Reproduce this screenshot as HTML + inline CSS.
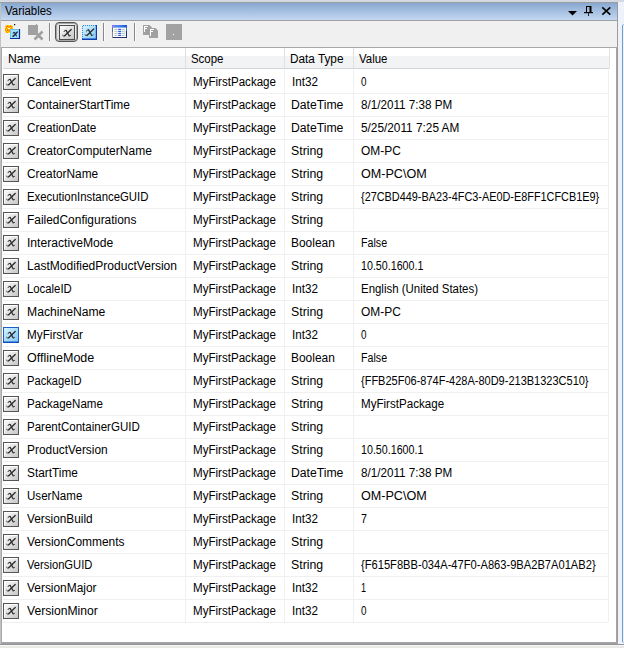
<!DOCTYPE html>
<html><head><meta charset="utf-8">
<style>
*{box-sizing:border-box}
html,body{margin:0;padding:0}
body{width:624px;height:648px;position:relative;overflow:hidden;background:#ebe8e8;font-family:"Liberation Sans",sans-serif;font-size:12px;color:#000}
.a{position:absolute}
.t{position:absolute;white-space:nowrap;line-height:14px;top:0;transform-origin:0 0}
.row{position:absolute;left:0;width:624px;height:23px}
.row .t{top:5px}
.rl{position:absolute;left:3px;width:605px;height:1px;background:#f0f0f0}
.icw{position:absolute;left:3px;width:16px;height:16px}
.ic{display:block}
</style></head><body>
<svg width="0" height="0" style="position:absolute"><defs>
<linearGradient id="gg" x1="0" y1="0" x2="1" y2="1"><stop offset="0" stop-color="#ffffff"/><stop offset="1" stop-color="#c4c4c4"/></linearGradient>
<linearGradient id="gb" x1="0" y1="0" x2="1" y2="1"><stop offset="0" stop-color="#d8f6ff"/><stop offset="1" stop-color="#7cc4f4"/></linearGradient>
</defs></svg>
<!-- top strip -->
<div class="a" style="left:0;top:0;width:624px;height:2px;background:#d4d8e0"></div>
<div class="a" style="left:0;top:2px;width:618px;height:1px;background:#9a9da2"></div>
<!-- right strip -->
<div class="a" style="left:618px;top:2px;width:6px;height:642px;background:#eef3fb"></div>
<div class="a" style="left:622px;top:25px;width:1px;height:617px;background:#6c9ec6"></div>
<div class="a" style="left:623px;top:24px;width:1px;height:1px;background:#9cbedc"></div>
<div class="a" style="left:623px;top:642px;width:1px;height:1px;background:#9cbedc"></div>
<!-- left border -->
<div class="a" style="left:0;top:3px;width:1px;height:641px;background:#c2c2c2"></div>
<div class="a" style="left:1px;top:48px;width:1px;height:596px;background:#a8a8a8"></div>
<!-- title bar -->
<div class="a" style="left:1px;top:3px;width:616px;height:17px;background:linear-gradient(#88a8d0,#c4d8f2)"></div>
<div class="a" style="left:617px;top:2px;width:1px;height:642px;background:#9c9c9c"></div>
<div class="a" style="left:1px;top:20px;width:616px;height:1px;background:#a0a0a0"></div>

<!-- title icons -->
<svg class="a" style="left:566px;top:9px" width="12" height="8" viewBox="0 0 12 8"><path d="M2,2 H11 L6.5,6.5 Z" fill="#000"/></svg>
<svg class="a" style="left:583px;top:5px" width="11" height="12" viewBox="0 0 11 12"><path d="M3.5,1.5 V7 M7.5,1.5 V7 M3,1.5 H8" stroke="#000" stroke-width="1" fill="none"/><rect x="6.5" y="1" width="2" height="6.5" fill="#000"/><rect x="1" y="7" width="9" height="1.2" fill="#000"/><rect x="5" y="8" width="1" height="3" fill="#202040"/></svg>
<svg class="a" style="left:600px;top:5px" width="13" height="12" viewBox="0 0 13 12"><path d="M2.3,2.3 L10.3,9.7 M10.3,2.3 L2.3,9.7" stroke="#000" stroke-width="1.6"/></svg>
<!-- toolbar -->
<div class="a" style="left:1px;top:21px;width:616px;height:26px;background:#f0f0f0"></div>
<!-- add icon -->
<svg class="a" style="left:4px;top:23px" width="18" height="18" viewBox="0 0 18 18">
<path d="M2.5,2 H7.5 L9,3.5 V8.5 L7.5,10 H2.5 L1,8.5 V3.5 Z" fill="#ff9c00"/>
<g fill="#ffe000"><rect x="2" y="2" width="1" height="1"/><rect x="4" y="2" width="2" height="1"/><rect x="7" y="2" width="1" height="1"/><rect x="1" y="4" width="1" height="1"/><rect x="3" y="4" width="1" height="1"/><rect x="6" y="4" width="1" height="1"/><rect x="8" y="4" width="1" height="1"/><rect x="2" y="6" width="1" height="1"/><rect x="7" y="6" width="1" height="1"/><rect x="1" y="8" width="1" height="1"/><rect x="3" y="8" width="1" height="1"/><rect x="6" y="8" width="1" height="1"/><rect x="8" y="8" width="1" height="1"/><rect x="4" y="9" width="2" height="1"/></g>
<g fill="#ff5a00"><rect x="3" y="3" width="1" height="1"/><rect x="6" y="3" width="1" height="1"/><rect x="3" y="7" width="1" height="1"/><rect x="6" y="7" width="1" height="1"/></g>
<rect x="4" y="5" width="2" height="1" fill="#fff"/>
<rect x="10" y="1" width="1.2" height="1.2" fill="#000"/>
<rect x="6" y="6" width="10" height="10" fill="#9fe4fb"/>
<path d="M6.5,15.5 V6.5 H15.5" stroke="#68c4ec" stroke-width="1" fill="none"/>
<path d="M6,15.5 H15.5 V6" stroke="#0a2c9c" stroke-width="1.2" fill="none"/>
<g fill="none" stroke="#1e2a40" stroke-linecap="round"><path d="M13.3,9 L9.4,13.2" stroke-width="1.3"/><path d="M9.4,13.2 Q8.8,13.8 8.3,13" stroke-width="0.9"/><path d="M9.2,10.2 Q9.6,8.9 10.6,9.5 L12.4,13" stroke-width="1.1"/></g>
</svg>
<!-- delete disabled -->
<svg class="a" style="left:27px;top:23px" width="18" height="18" viewBox="0 0 18 18">
<rect x="1" y="2" width="10" height="10" fill="#a0a0a0"/><rect x="9" y="1" width="1" height="1" fill="#a0a0a0"/>
<path d="M7.5,16.5 L15.5,8.5 M8,9 L15.5,16.5" stroke="#a0a0a0" stroke-width="2.6"/>
</svg>
<div class="a" style="left:49px;top:23px;width:1px;height:18px;background:#888"></div><div class="a" style="left:50px;top:23px;width:1px;height:18px;background:#fbfbfb"></div>
<!-- pressed toggle -->
<div class="a" style="left:55px;top:22px;width:23px;height:20px;border:1px solid #555;border-radius:4px;background:linear-gradient(90deg,#d8d8d8,#f4f4f4 30%,#ececec);box-shadow:inset 0 0 0 1px #a8a8a8"></div>
<svg class="a" style="left:59px;top:25px" width="16" height="15" viewBox="0 0 16 15"><rect x="0.5" y="0.5" width="15" height="14" fill="url(#gg)" stroke="#4d4d4d"/><g fill="none" stroke="#2e2e2e" stroke-linecap="round"><path d="M12.2,4.5 L5.7,10.8" stroke-width="1.35"/><path d="M5.7,10.8 Q4.6,11.8 3.5,10.4" stroke-width="0.95"/><path d="M5.0,6.6 Q5.4,4.6 7.1,5.4" stroke-width="0.95"/><path d="M7.1,5.4 L10.1,10.8" stroke-width="1.25"/><path d="M10.1,10.8 Q10.9,11.8 11.6,10.3" stroke-width="0.95"/></g></svg>
<svg class="a" style="left:81px;top:24px" width="16" height="16" viewBox="0 0 16 16"><rect x="1" y="1" width="15" height="15" fill="url(#gb)"/><path d="M1.5,15 V1.5 H15" stroke="#3a86d6" stroke-width="1" stroke-dasharray="1 1" fill="none"/><path d="M1,15.3 H15.5 V1" stroke="#0c3cb4" stroke-width="1.4" fill="none"/><g transform="translate(0.5,0.5)"><g fill="none" stroke="#2e2e2e" stroke-linecap="round"><path d="M12.2,4.5 L5.7,10.8" stroke-width="1.35"/><path d="M5.7,10.8 Q4.6,11.8 3.5,10.4" stroke-width="0.95"/><path d="M5.0,6.6 Q5.4,4.6 7.1,5.4" stroke-width="0.95"/><path d="M7.1,5.4 L10.1,10.8" stroke-width="1.25"/><path d="M10.1,10.8 Q10.9,11.8 11.6,10.3" stroke-width="0.95"/></g></g></svg>
<div class="a" style="left:103px;top:23px;width:1px;height:18px;background:#888"></div><div class="a" style="left:104px;top:23px;width:1px;height:18px;background:#fbfbfb"></div>
<!-- grid icon -->
<svg class="a" style="left:112px;top:25px" width="15" height="13" viewBox="0 0 15 13">
<defs><linearGradient id="gt" x1="0" x2="1"><stop offset="0" stop-color="#8a7cff"/><stop offset="0.5" stop-color="#3c82f0"/><stop offset="1" stop-color="#1c50d8"/></linearGradient></defs>
<rect x="0" y="0" width="15" height="13" fill="#4a7a90"/>
<rect x="0" y="0" width="15" height="2.6" fill="url(#gt)"/>
<rect x="0" y="12" width="15" height="1" fill="#283070"/>
<rect x="14" y="6" width="1" height="7" fill="#2a2a6a"/>
<rect x="0" y="7" width="1" height="6" fill="#8a8aa0"/>
<rect x="1" y="2.6" width="13" height="9.4" fill="#fff"/>
<g fill="#c4c4c4"><rect x="2.5" y="3.8" width="3" height="1.2"/><rect x="2.5" y="5.8" width="3" height="1.2"/><rect x="2.5" y="7.8" width="3" height="1.2"/><rect x="2.5" y="9.8" width="3" height="1.2"/>
<rect x="9.5" y="3.8" width="3" height="1.2"/><rect x="9.5" y="5.8" width="3" height="1.2"/><rect x="9.5" y="7.8" width="3" height="1.2"/><rect x="9.5" y="9.8" width="3" height="1.2"/></g>
<g fill="#c8ecfa"><rect x="12" y="5" width="1.5" height="6"/></g>
<g fill="#2a5ce0"><rect x="6.2" y="3.8" width="2.8" height="1.2"/><rect x="6.2" y="5.8" width="2.8" height="1.2"/><rect x="6.2" y="7.8" width="2.8" height="1.2"/><rect x="6.2" y="9.8" width="2.8" height="1.2"/></g>
</svg>
<div class="a" style="left:134px;top:23px;width:1px;height:18px;background:#888"></div><div class="a" style="left:135px;top:23px;width:1px;height:18px;background:#fbfbfb"></div>
<!-- FF icon -->
<svg class="a" style="left:143px;top:25px" width="16" height="13" viewBox="0 0 16 13">
<path d="M0,0 H6.5 L9,2.5 V10 H0 Z" fill="#a0a0a0"/><path d="M6,3 H12.5 L15,5.5 V13 H6 Z" fill="#a0a0a0"/>
<g fill="#fff" shape-rendering="crispEdges"><rect x="1" y="1" width="1" height="6"/><rect x="1" y="1" width="4" height="1"/><rect x="1" y="3" width="3" height="1"/></g>
<g fill="#fff" shape-rendering="crispEdges"><rect x="7" y="4" width="1" height="7"/><rect x="7" y="4" width="4" height="1"/><rect x="7" y="6" width="3" height="1"/></g>
</svg>
<div class="a" style="left:166px;top:24px;width:16px;height:16px;background:#a2a2a2"></div>
<div class="a" style="left:173px;top:34px;width:1px;height:1px;background:#fff"></div>
<!-- grid -->
<div class="a" style="left:1px;top:47px;width:617px;height:1px;background:#a8a8a8"></div>
<div class="a" style="left:2px;top:48px;width:614px;height:594px;background:#fff"></div>
<div class="a" style="left:616px;top:47px;width:1px;height:597px;background:#a4a4a4"></div>
<div class="a" style="left:1px;top:642px;width:617px;height:2px;background:#a2a3a6"></div>
<div class="a" style="left:0px;top:644px;width:624px;height:1px;background:#939393"></div>
<div class="a" style="left:0;top:645px;width:624px;height:1px;background:#f8f8f8"></div>
<!-- header -->
<div class="a" style="left:3px;top:56px;width:606px;height:12px;background:#f2f3f5"></div>
<div class="a" style="left:3px;top:68px;width:607px;height:1px;background:#d5d5d5"></div>
<div class="a" style="left:609px;top:48px;width:1px;height:21px;background:#e2e2e2"></div>
<div class="a" style="left:185px;top:48px;width:1px;height:20px;background:#e0e0e0"></div>
<div class="a" style="left:284px;top:48px;width:1px;height:20px;background:#e0e0e0"></div>
<div class="a" style="left:353px;top:48px;width:1px;height:20px;background:#e0e0e0"></div>
<span class="t" style="left:7.6px;transform:scaleX(1.0159);top:52px;">Name</span><span class="t" style="left:190.7px;transform:scaleX(0.9522);top:52px;">Scope</span><span class="t" style="left:289.6px;transform:scaleX(0.9814);top:52px;">Data Type</span><span class="t" style="left:359.0px;transform:scaleX(0.9522);top:52px;">Value</span><span class="t" style="left:5.2px;transform:scaleX(0.9528);top:4px;">Variables</span>
<!-- column lines -->
<div class="a" style="left:185px;top:70px;width:1px;height:552px;background:#f0f0f0"></div>
<div class="a" style="left:284px;top:70px;width:1px;height:552px;background:#f0f0f0"></div>
<div class="a" style="left:353px;top:70px;width:1px;height:552px;background:#f0f0f0"></div>
<div class="a" style="left:608px;top:70px;width:1px;height:552px;background:#f0f0f0"></div>
<div class="rl" style="top:93px"></div>
<div class="icw" style="top:74px"><svg class="ic" width="16" height="16" viewBox="0 0 16 16"><rect x="0.5" y="0.5" width="15" height="15" fill="url(#gg)" stroke="#555"/><path d="M1.5,14 V1.5 H14" fill="none" stroke="#fff" stroke-width="1"/><g fill="none" stroke="#2e2e2e" stroke-linecap="round"><path d="M12.2,4.5 L5.7,10.8" stroke-width="1.35"/><path d="M5.7,10.8 Q4.6,11.8 3.5,10.4" stroke-width="0.95"/><path d="M5.0,6.6 Q5.4,4.6 7.1,5.4" stroke-width="0.95"/><path d="M7.1,5.4 L10.1,10.8" stroke-width="1.25"/><path d="M10.1,10.8 Q10.9,11.8 11.6,10.3" stroke-width="0.95"/></g></svg></div>
<div class="row" style="top:70px"><span class="t" style="left:27.0px;transform:scaleX(0.9426);">CancelEvent</span><span class="t" style="left:193.0px;transform:scaleX(0.9649);">MyFirstPackage</span><span class="t" style="left:291.8px;transform:scaleX(0.9732);">Int32</span><span class="t" style="left:361.0px;transform:scaleX(0.8226);">0</span></div>
<div class="rl" style="top:116px"></div>
<div class="icw" style="top:97px"><svg class="ic" width="16" height="16" viewBox="0 0 16 16"><rect x="0.5" y="0.5" width="15" height="15" fill="url(#gg)" stroke="#555"/><path d="M1.5,14 V1.5 H14" fill="none" stroke="#fff" stroke-width="1"/><g fill="none" stroke="#2e2e2e" stroke-linecap="round"><path d="M12.2,4.5 L5.7,10.8" stroke-width="1.35"/><path d="M5.7,10.8 Q4.6,11.8 3.5,10.4" stroke-width="0.95"/><path d="M5.0,6.6 Q5.4,4.6 7.1,5.4" stroke-width="0.95"/><path d="M7.1,5.4 L10.1,10.8" stroke-width="1.25"/><path d="M10.1,10.8 Q10.9,11.8 11.6,10.3" stroke-width="0.95"/></g></svg></div>
<div class="row" style="top:93px"><span class="t" style="left:27.0px;transform:scaleX(0.9932);">ContainerStartTime</span><span class="t" style="left:193.0px;transform:scaleX(0.9649);">MyFirstPackage</span><span class="t" style="left:291.0px;transform:scaleX(1.0157);">DateTime</span><span class="t" style="left:361.0px;transform:scaleX(0.972);">8/1/2011 7:38 PM</span></div>
<div class="rl" style="top:139px"></div>
<div class="icw" style="top:120px"><svg class="ic" width="16" height="16" viewBox="0 0 16 16"><rect x="0.5" y="0.5" width="15" height="15" fill="url(#gg)" stroke="#555"/><path d="M1.5,14 V1.5 H14" fill="none" stroke="#fff" stroke-width="1"/><g fill="none" stroke="#2e2e2e" stroke-linecap="round"><path d="M12.2,4.5 L5.7,10.8" stroke-width="1.35"/><path d="M5.7,10.8 Q4.6,11.8 3.5,10.4" stroke-width="0.95"/><path d="M5.0,6.6 Q5.4,4.6 7.1,5.4" stroke-width="0.95"/><path d="M7.1,5.4 L10.1,10.8" stroke-width="1.25"/><path d="M10.1,10.8 Q10.9,11.8 11.6,10.3" stroke-width="0.95"/></g></svg></div>
<div class="row" style="top:116px"><span class="t" style="left:27.0px;transform:scaleX(0.9801);">CreationDate</span><span class="t" style="left:193.0px;transform:scaleX(0.9649);">MyFirstPackage</span><span class="t" style="left:291.0px;transform:scaleX(1.0157);">DateTime</span><span class="t" style="left:361.0px;transform:scaleX(0.9848);">5/25/2011 7:25 AM</span></div>
<div class="rl" style="top:162px"></div>
<div class="icw" style="top:143px"><svg class="ic" width="16" height="16" viewBox="0 0 16 16"><rect x="0.5" y="0.5" width="15" height="15" fill="url(#gg)" stroke="#555"/><path d="M1.5,14 V1.5 H14" fill="none" stroke="#fff" stroke-width="1"/><g fill="none" stroke="#2e2e2e" stroke-linecap="round"><path d="M12.2,4.5 L5.7,10.8" stroke-width="1.35"/><path d="M5.7,10.8 Q4.6,11.8 3.5,10.4" stroke-width="0.95"/><path d="M5.0,6.6 Q5.4,4.6 7.1,5.4" stroke-width="0.95"/><path d="M7.1,5.4 L10.1,10.8" stroke-width="1.25"/><path d="M10.1,10.8 Q10.9,11.8 11.6,10.3" stroke-width="0.95"/></g></svg></div>
<div class="row" style="top:139px"><span class="t" style="left:27.0px;transform:scaleX(1.0008);">CreatorComputerName</span><span class="t" style="left:193.0px;transform:scaleX(0.9649);">MyFirstPackage</span><span class="t" style="left:291.0px;transform:scaleX(1.0261);">String</span><span class="t" style="left:361.0px;transform:scaleX(0.9949);">OM-PC</span></div>
<div class="rl" style="top:185px"></div>
<div class="icw" style="top:166px"><svg class="ic" width="16" height="16" viewBox="0 0 16 16"><rect x="0.5" y="0.5" width="15" height="15" fill="url(#gg)" stroke="#555"/><path d="M1.5,14 V1.5 H14" fill="none" stroke="#fff" stroke-width="1"/><g fill="none" stroke="#2e2e2e" stroke-linecap="round"><path d="M12.2,4.5 L5.7,10.8" stroke-width="1.35"/><path d="M5.7,10.8 Q4.6,11.8 3.5,10.4" stroke-width="0.95"/><path d="M5.0,6.6 Q5.4,4.6 7.1,5.4" stroke-width="0.95"/><path d="M7.1,5.4 L10.1,10.8" stroke-width="1.25"/><path d="M10.1,10.8 Q10.9,11.8 11.6,10.3" stroke-width="0.95"/></g></svg></div>
<div class="row" style="top:162px"><span class="t" style="left:27.0px;transform:scaleX(0.9874);">CreatorName</span><span class="t" style="left:193.0px;transform:scaleX(0.9649);">MyFirstPackage</span><span class="t" style="left:291.0px;transform:scaleX(1.0261);">String</span><span class="t" style="left:361.0px;transform:scaleX(1.0486);">OM-PC\OM</span></div>
<div class="rl" style="top:208px"></div>
<div class="icw" style="top:189px"><svg class="ic" width="16" height="16" viewBox="0 0 16 16"><rect x="0.5" y="0.5" width="15" height="15" fill="url(#gg)" stroke="#555"/><path d="M1.5,14 V1.5 H14" fill="none" stroke="#fff" stroke-width="1"/><g fill="none" stroke="#2e2e2e" stroke-linecap="round"><path d="M12.2,4.5 L5.7,10.8" stroke-width="1.35"/><path d="M5.7,10.8 Q4.6,11.8 3.5,10.4" stroke-width="0.95"/><path d="M5.0,6.6 Q5.4,4.6 7.1,5.4" stroke-width="0.95"/><path d="M7.1,5.4 L10.1,10.8" stroke-width="1.25"/><path d="M10.1,10.8 Q10.9,11.8 11.6,10.3" stroke-width="0.95"/></g></svg></div>
<div class="row" style="top:185px"><span class="t" style="left:27.0px;transform:scaleX(0.9482);">ExecutionInstanceGUID</span><span class="t" style="left:193.0px;transform:scaleX(0.9649);">MyFirstPackage</span><span class="t" style="left:291.0px;transform:scaleX(1.0261);">String</span><span class="t" style="left:361.0px;transform:scaleX(0.9063);">{27CBD449-BA23-4FC3-AE0D-E8FF1CFCB1E9}</span></div>
<div class="rl" style="top:231px"></div>
<div class="icw" style="top:212px"><svg class="ic" width="16" height="16" viewBox="0 0 16 16"><rect x="0.5" y="0.5" width="15" height="15" fill="url(#gg)" stroke="#555"/><path d="M1.5,14 V1.5 H14" fill="none" stroke="#fff" stroke-width="1"/><g fill="none" stroke="#2e2e2e" stroke-linecap="round"><path d="M12.2,4.5 L5.7,10.8" stroke-width="1.35"/><path d="M5.7,10.8 Q4.6,11.8 3.5,10.4" stroke-width="0.95"/><path d="M5.0,6.6 Q5.4,4.6 7.1,5.4" stroke-width="0.95"/><path d="M7.1,5.4 L10.1,10.8" stroke-width="1.25"/><path d="M10.1,10.8 Q10.9,11.8 11.6,10.3" stroke-width="0.95"/></g></svg></div>
<div class="row" style="top:208px"><span class="t" style="left:27.0px;transform:scaleX(0.9945);">FailedConfigurations</span><span class="t" style="left:193.0px;transform:scaleX(0.9649);">MyFirstPackage</span><span class="t" style="left:291.0px;transform:scaleX(1.0261);">String</span></div>
<div class="rl" style="top:254px"></div>
<div class="icw" style="top:235px"><svg class="ic" width="16" height="16" viewBox="0 0 16 16"><rect x="0.5" y="0.5" width="15" height="15" fill="url(#gg)" stroke="#555"/><path d="M1.5,14 V1.5 H14" fill="none" stroke="#fff" stroke-width="1"/><g fill="none" stroke="#2e2e2e" stroke-linecap="round"><path d="M12.2,4.5 L5.7,10.8" stroke-width="1.35"/><path d="M5.7,10.8 Q4.6,11.8 3.5,10.4" stroke-width="0.95"/><path d="M5.0,6.6 Q5.4,4.6 7.1,5.4" stroke-width="0.95"/><path d="M7.1,5.4 L10.1,10.8" stroke-width="1.25"/><path d="M10.1,10.8 Q10.9,11.8 11.6,10.3" stroke-width="0.95"/></g></svg></div>
<div class="row" style="top:231px"><span class="t" style="left:27.0px;transform:scaleX(1.0106);">InteractiveMode</span><span class="t" style="left:193.0px;transform:scaleX(0.9649);">MyFirstPackage</span><span class="t" style="left:291.0px;transform:scaleX(0.9954);">Boolean</span><span class="t" style="left:361.0px;transform:scaleX(0.8889);">False</span></div>
<div class="rl" style="top:277px"></div>
<div class="icw" style="top:258px"><svg class="ic" width="16" height="16" viewBox="0 0 16 16"><rect x="0.5" y="0.5" width="15" height="15" fill="url(#gg)" stroke="#555"/><path d="M1.5,14 V1.5 H14" fill="none" stroke="#fff" stroke-width="1"/><g fill="none" stroke="#2e2e2e" stroke-linecap="round"><path d="M12.2,4.5 L5.7,10.8" stroke-width="1.35"/><path d="M5.7,10.8 Q4.6,11.8 3.5,10.4" stroke-width="0.95"/><path d="M5.0,6.6 Q5.4,4.6 7.1,5.4" stroke-width="0.95"/><path d="M7.1,5.4 L10.1,10.8" stroke-width="1.25"/><path d="M10.1,10.8 Q10.9,11.8 11.6,10.3" stroke-width="0.95"/></g></svg></div>
<div class="row" style="top:254px"><span class="t" style="left:27.0px;transform:scaleX(1.004);">LastModifiedProductVersion</span><span class="t" style="left:193.0px;transform:scaleX(0.9649);">MyFirstPackage</span><span class="t" style="left:291.0px;transform:scaleX(1.0261);">String</span><span class="t" style="left:361.0px;transform:scaleX(0.8906);">10.50.1600.1</span></div>
<div class="rl" style="top:300px"></div>
<div class="icw" style="top:281px"><svg class="ic" width="16" height="16" viewBox="0 0 16 16"><rect x="0.5" y="0.5" width="15" height="15" fill="url(#gg)" stroke="#555"/><path d="M1.5,14 V1.5 H14" fill="none" stroke="#fff" stroke-width="1"/><g fill="none" stroke="#2e2e2e" stroke-linecap="round"><path d="M12.2,4.5 L5.7,10.8" stroke-width="1.35"/><path d="M5.7,10.8 Q4.6,11.8 3.5,10.4" stroke-width="0.95"/><path d="M5.0,6.6 Q5.4,4.6 7.1,5.4" stroke-width="0.95"/><path d="M7.1,5.4 L10.1,10.8" stroke-width="1.25"/><path d="M10.1,10.8 Q10.9,11.8 11.6,10.3" stroke-width="0.95"/></g></svg></div>
<div class="row" style="top:277px"><span class="t" style="left:27.0px;transform:scaleX(0.9444);">LocaleID</span><span class="t" style="left:193.0px;transform:scaleX(0.9649);">MyFirstPackage</span><span class="t" style="left:291.8px;transform:scaleX(0.9732);">Int32</span><span class="t" style="left:361.0px;transform:scaleX(0.9533);">English (United States)</span></div>
<div class="rl" style="top:323px"></div>
<div class="icw" style="top:304px"><svg class="ic" width="16" height="16" viewBox="0 0 16 16"><rect x="0.5" y="0.5" width="15" height="15" fill="url(#gg)" stroke="#555"/><path d="M1.5,14 V1.5 H14" fill="none" stroke="#fff" stroke-width="1"/><g fill="none" stroke="#2e2e2e" stroke-linecap="round"><path d="M12.2,4.5 L5.7,10.8" stroke-width="1.35"/><path d="M5.7,10.8 Q4.6,11.8 3.5,10.4" stroke-width="0.95"/><path d="M5.0,6.6 Q5.4,4.6 7.1,5.4" stroke-width="0.95"/><path d="M7.1,5.4 L10.1,10.8" stroke-width="1.25"/><path d="M10.1,10.8 Q10.9,11.8 11.6,10.3" stroke-width="0.95"/></g></svg></div>
<div class="row" style="top:300px"><span class="t" style="left:27.0px;transform:scaleX(1.013);">MachineName</span><span class="t" style="left:193.0px;transform:scaleX(0.9649);">MyFirstPackage</span><span class="t" style="left:291.0px;transform:scaleX(1.0261);">String</span><span class="t" style="left:361.0px;transform:scaleX(0.9949);">OM-PC</span></div>
<div class="rl" style="top:346px"></div>
<div class="icw" style="top:327px"><svg class="ic" width="16" height="16" viewBox="0 0 16 16"><defs></defs><rect x="0.5" y="0.5" width="15" height="15" fill="url(#gb)" stroke="#1d5fc9"/><rect x="0" y="14.5" width="16" height="1.5" fill="#0f4fbf"/><g fill="none" stroke="#2e2e2e" stroke-linecap="round"><path d="M12.2,4.5 L5.7,10.8" stroke-width="1.35"/><path d="M5.7,10.8 Q4.6,11.8 3.5,10.4" stroke-width="0.95"/><path d="M5.0,6.6 Q5.4,4.6 7.1,5.4" stroke-width="0.95"/><path d="M7.1,5.4 L10.1,10.8" stroke-width="1.25"/><path d="M10.1,10.8 Q10.9,11.8 11.6,10.3" stroke-width="0.95"/></g></svg></div>
<div class="row" style="top:323px"><span class="t" style="left:27.0px;transform:scaleX(0.9772);">MyFirstVar</span><span class="t" style="left:193.0px;transform:scaleX(0.9649);">MyFirstPackage</span><span class="t" style="left:291.8px;transform:scaleX(0.9732);">Int32</span><span class="t" style="left:361.0px;transform:scaleX(0.8226);">0</span></div>
<div class="rl" style="top:369px"></div>
<div class="icw" style="top:350px"><svg class="ic" width="16" height="16" viewBox="0 0 16 16"><rect x="0.5" y="0.5" width="15" height="15" fill="url(#gg)" stroke="#555"/><path d="M1.5,14 V1.5 H14" fill="none" stroke="#fff" stroke-width="1"/><g fill="none" stroke="#2e2e2e" stroke-linecap="round"><path d="M12.2,4.5 L5.7,10.8" stroke-width="1.35"/><path d="M5.7,10.8 Q4.6,11.8 3.5,10.4" stroke-width="0.95"/><path d="M5.0,6.6 Q5.4,4.6 7.1,5.4" stroke-width="0.95"/><path d="M7.1,5.4 L10.1,10.8" stroke-width="1.25"/><path d="M10.1,10.8 Q10.9,11.8 11.6,10.3" stroke-width="0.95"/></g></svg></div>
<div class="row" style="top:346px"><span class="t" style="left:27.0px;transform:scaleX(1.0438);">OfflineMode</span><span class="t" style="left:193.0px;transform:scaleX(0.9649);">MyFirstPackage</span><span class="t" style="left:291.0px;transform:scaleX(0.9954);">Boolean</span><span class="t" style="left:361.0px;transform:scaleX(0.8889);">False</span></div>
<div class="rl" style="top:392px"></div>
<div class="icw" style="top:373px"><svg class="ic" width="16" height="16" viewBox="0 0 16 16"><rect x="0.5" y="0.5" width="15" height="15" fill="url(#gg)" stroke="#555"/><path d="M1.5,14 V1.5 H14" fill="none" stroke="#fff" stroke-width="1"/><g fill="none" stroke="#2e2e2e" stroke-linecap="round"><path d="M12.2,4.5 L5.7,10.8" stroke-width="1.35"/><path d="M5.7,10.8 Q4.6,11.8 3.5,10.4" stroke-width="0.95"/><path d="M5.0,6.6 Q5.4,4.6 7.1,5.4" stroke-width="0.95"/><path d="M7.1,5.4 L10.1,10.8" stroke-width="1.25"/><path d="M10.1,10.8 Q10.9,11.8 11.6,10.3" stroke-width="0.95"/></g></svg></div>
<div class="row" style="top:369px"><span class="t" style="left:27.0px;transform:scaleX(0.9294);">PackageID</span><span class="t" style="left:193.0px;transform:scaleX(0.9649);">MyFirstPackage</span><span class="t" style="left:291.0px;transform:scaleX(1.0261);">String</span><span class="t" style="left:361.0px;transform:scaleX(0.9169);">{FFB25F06-874F-428A-80D9-213B1323C510}</span></div>
<div class="rl" style="top:415px"></div>
<div class="icw" style="top:396px"><svg class="ic" width="16" height="16" viewBox="0 0 16 16"><rect x="0.5" y="0.5" width="15" height="15" fill="url(#gg)" stroke="#555"/><path d="M1.5,14 V1.5 H14" fill="none" stroke="#fff" stroke-width="1"/><g fill="none" stroke="#2e2e2e" stroke-linecap="round"><path d="M12.2,4.5 L5.7,10.8" stroke-width="1.35"/><path d="M5.7,10.8 Q4.6,11.8 3.5,10.4" stroke-width="0.95"/><path d="M5.0,6.6 Q5.4,4.6 7.1,5.4" stroke-width="0.95"/><path d="M7.1,5.4 L10.1,10.8" stroke-width="1.25"/><path d="M10.1,10.8 Q10.9,11.8 11.6,10.3" stroke-width="0.95"/></g></svg></div>
<div class="row" style="top:392px"><span class="t" style="left:27.0px;transform:scaleX(0.9642);">PackageName</span><span class="t" style="left:193.0px;transform:scaleX(0.9649);">MyFirstPackage</span><span class="t" style="left:291.0px;transform:scaleX(1.0261);">String</span><span class="t" style="left:361.0px;transform:scaleX(0.9661);">MyFirstPackage</span></div>
<div class="rl" style="top:438px"></div>
<div class="icw" style="top:419px"><svg class="ic" width="16" height="16" viewBox="0 0 16 16"><rect x="0.5" y="0.5" width="15" height="15" fill="url(#gg)" stroke="#555"/><path d="M1.5,14 V1.5 H14" fill="none" stroke="#fff" stroke-width="1"/><g fill="none" stroke="#2e2e2e" stroke-linecap="round"><path d="M12.2,4.5 L5.7,10.8" stroke-width="1.35"/><path d="M5.7,10.8 Q4.6,11.8 3.5,10.4" stroke-width="0.95"/><path d="M5.0,6.6 Q5.4,4.6 7.1,5.4" stroke-width="0.95"/><path d="M7.1,5.4 L10.1,10.8" stroke-width="1.25"/><path d="M10.1,10.8 Q10.9,11.8 11.6,10.3" stroke-width="0.95"/></g></svg></div>
<div class="row" style="top:415px"><span class="t" style="left:27.0px;transform:scaleX(0.9606);">ParentContainerGUID</span><span class="t" style="left:193.0px;transform:scaleX(0.9649);">MyFirstPackage</span><span class="t" style="left:291.0px;transform:scaleX(1.0261);">String</span></div>
<div class="rl" style="top:461px"></div>
<div class="icw" style="top:442px"><svg class="ic" width="16" height="16" viewBox="0 0 16 16"><rect x="0.5" y="0.5" width="15" height="15" fill="url(#gg)" stroke="#555"/><path d="M1.5,14 V1.5 H14" fill="none" stroke="#fff" stroke-width="1"/><g fill="none" stroke="#2e2e2e" stroke-linecap="round"><path d="M12.2,4.5 L5.7,10.8" stroke-width="1.35"/><path d="M5.7,10.8 Q4.6,11.8 3.5,10.4" stroke-width="0.95"/><path d="M5.0,6.6 Q5.4,4.6 7.1,5.4" stroke-width="0.95"/><path d="M7.1,5.4 L10.1,10.8" stroke-width="1.25"/><path d="M10.1,10.8 Q10.9,11.8 11.6,10.3" stroke-width="0.95"/></g></svg></div>
<div class="row" style="top:438px"><span class="t" style="left:27.0px;transform:scaleX(0.9913);">ProductVersion</span><span class="t" style="left:193.0px;transform:scaleX(0.9649);">MyFirstPackage</span><span class="t" style="left:291.0px;transform:scaleX(1.0261);">String</span><span class="t" style="left:361.0px;transform:scaleX(0.8906);">10.50.1600.1</span></div>
<div class="rl" style="top:484px"></div>
<div class="icw" style="top:465px"><svg class="ic" width="16" height="16" viewBox="0 0 16 16"><rect x="0.5" y="0.5" width="15" height="15" fill="url(#gg)" stroke="#555"/><path d="M1.5,14 V1.5 H14" fill="none" stroke="#fff" stroke-width="1"/><g fill="none" stroke="#2e2e2e" stroke-linecap="round"><path d="M12.2,4.5 L5.7,10.8" stroke-width="1.35"/><path d="M5.7,10.8 Q4.6,11.8 3.5,10.4" stroke-width="0.95"/><path d="M5.0,6.6 Q5.4,4.6 7.1,5.4" stroke-width="0.95"/><path d="M7.1,5.4 L10.1,10.8" stroke-width="1.25"/><path d="M10.1,10.8 Q10.9,11.8 11.6,10.3" stroke-width="0.95"/></g></svg></div>
<div class="row" style="top:461px"><span class="t" style="left:27.0px;transform:scaleX(0.9863);">StartTime</span><span class="t" style="left:193.0px;transform:scaleX(0.9649);">MyFirstPackage</span><span class="t" style="left:291.0px;transform:scaleX(1.0157);">DateTime</span><span class="t" style="left:361.0px;transform:scaleX(0.972);">8/1/2011 7:38 PM</span></div>
<div class="rl" style="top:507px"></div>
<div class="icw" style="top:488px"><svg class="ic" width="16" height="16" viewBox="0 0 16 16"><rect x="0.5" y="0.5" width="15" height="15" fill="url(#gg)" stroke="#555"/><path d="M1.5,14 V1.5 H14" fill="none" stroke="#fff" stroke-width="1"/><g fill="none" stroke="#2e2e2e" stroke-linecap="round"><path d="M12.2,4.5 L5.7,10.8" stroke-width="1.35"/><path d="M5.7,10.8 Q4.6,11.8 3.5,10.4" stroke-width="0.95"/><path d="M5.0,6.6 Q5.4,4.6 7.1,5.4" stroke-width="0.95"/><path d="M7.1,5.4 L10.1,10.8" stroke-width="1.25"/><path d="M10.1,10.8 Q10.9,11.8 11.6,10.3" stroke-width="0.95"/></g></svg></div>
<div class="row" style="top:484px"><span class="t" style="left:27.0px;transform:scaleX(0.9648);">UserName</span><span class="t" style="left:193.0px;transform:scaleX(0.9649);">MyFirstPackage</span><span class="t" style="left:291.0px;transform:scaleX(1.0261);">String</span><span class="t" style="left:361.0px;transform:scaleX(1.0486);">OM-PC\OM</span></div>
<div class="rl" style="top:530px"></div>
<div class="icw" style="top:511px"><svg class="ic" width="16" height="16" viewBox="0 0 16 16"><rect x="0.5" y="0.5" width="15" height="15" fill="url(#gg)" stroke="#555"/><path d="M1.5,14 V1.5 H14" fill="none" stroke="#fff" stroke-width="1"/><g fill="none" stroke="#2e2e2e" stroke-linecap="round"><path d="M12.2,4.5 L5.7,10.8" stroke-width="1.35"/><path d="M5.7,10.8 Q4.6,11.8 3.5,10.4" stroke-width="0.95"/><path d="M5.0,6.6 Q5.4,4.6 7.1,5.4" stroke-width="0.95"/><path d="M7.1,5.4 L10.1,10.8" stroke-width="1.25"/><path d="M10.1,10.8 Q10.9,11.8 11.6,10.3" stroke-width="0.95"/></g></svg></div>
<div class="row" style="top:507px"><span class="t" style="left:27.0px;transform:scaleX(0.9833);">VersionBuild</span><span class="t" style="left:193.0px;transform:scaleX(0.9649);">MyFirstPackage</span><span class="t" style="left:291.8px;transform:scaleX(0.9732);">Int32</span><span class="t" style="left:361.0px;transform:scaleX(0.8852);">7</span></div>
<div class="rl" style="top:553px"></div>
<div class="icw" style="top:534px"><svg class="ic" width="16" height="16" viewBox="0 0 16 16"><rect x="0.5" y="0.5" width="15" height="15" fill="url(#gg)" stroke="#555"/><path d="M1.5,14 V1.5 H14" fill="none" stroke="#fff" stroke-width="1"/><g fill="none" stroke="#2e2e2e" stroke-linecap="round"><path d="M12.2,4.5 L5.7,10.8" stroke-width="1.35"/><path d="M5.7,10.8 Q4.6,11.8 3.5,10.4" stroke-width="0.95"/><path d="M5.0,6.6 Q5.4,4.6 7.1,5.4" stroke-width="0.95"/><path d="M7.1,5.4 L10.1,10.8" stroke-width="1.25"/><path d="M10.1,10.8 Q10.9,11.8 11.6,10.3" stroke-width="0.95"/></g></svg></div>
<div class="row" style="top:530px"><span class="t" style="left:27.0px;transform:scaleX(0.9949);">VersionComments</span><span class="t" style="left:193.0px;transform:scaleX(0.9649);">MyFirstPackage</span><span class="t" style="left:291.0px;transform:scaleX(1.0261);">String</span></div>
<div class="rl" style="top:576px"></div>
<div class="icw" style="top:557px"><svg class="ic" width="16" height="16" viewBox="0 0 16 16"><rect x="0.5" y="0.5" width="15" height="15" fill="url(#gg)" stroke="#555"/><path d="M1.5,14 V1.5 H14" fill="none" stroke="#fff" stroke-width="1"/><g fill="none" stroke="#2e2e2e" stroke-linecap="round"><path d="M12.2,4.5 L5.7,10.8" stroke-width="1.35"/><path d="M5.7,10.8 Q4.6,11.8 3.5,10.4" stroke-width="0.95"/><path d="M5.0,6.6 Q5.4,4.6 7.1,5.4" stroke-width="0.95"/><path d="M7.1,5.4 L10.1,10.8" stroke-width="1.25"/><path d="M10.1,10.8 Q10.9,11.8 11.6,10.3" stroke-width="0.95"/></g></svg></div>
<div class="row" style="top:553px"><span class="t" style="left:27.0px;transform:scaleX(0.9337);">VersionGUID</span><span class="t" style="left:193.0px;transform:scaleX(0.9649);">MyFirstPackage</span><span class="t" style="left:291.0px;transform:scaleX(1.0261);">String</span><span class="t" style="left:361.0px;transform:scaleX(0.9279);">{F615F8BB-034A-47F0-A863-9BA2B7A01AB2}</span></div>
<div class="rl" style="top:599px"></div>
<div class="icw" style="top:580px"><svg class="ic" width="16" height="16" viewBox="0 0 16 16"><rect x="0.5" y="0.5" width="15" height="15" fill="url(#gg)" stroke="#555"/><path d="M1.5,14 V1.5 H14" fill="none" stroke="#fff" stroke-width="1"/><g fill="none" stroke="#2e2e2e" stroke-linecap="round"><path d="M12.2,4.5 L5.7,10.8" stroke-width="1.35"/><path d="M5.7,10.8 Q4.6,11.8 3.5,10.4" stroke-width="0.95"/><path d="M5.0,6.6 Q5.4,4.6 7.1,5.4" stroke-width="0.95"/><path d="M7.1,5.4 L10.1,10.8" stroke-width="1.25"/><path d="M10.1,10.8 Q10.9,11.8 11.6,10.3" stroke-width="0.95"/></g></svg></div>
<div class="row" style="top:576px"><span class="t" style="left:27.0px;transform:scaleX(0.9928);">VersionMajor</span><span class="t" style="left:193.0px;transform:scaleX(0.9649);">MyFirstPackage</span><span class="t" style="left:291.8px;transform:scaleX(0.9732);">Int32</span><span class="t" style="left:361.0px;transform:scaleX(0.7541);">1</span></div>
<div class="rl" style="top:622px"></div>
<div class="icw" style="top:603px"><svg class="ic" width="16" height="16" viewBox="0 0 16 16"><rect x="0.5" y="0.5" width="15" height="15" fill="url(#gg)" stroke="#555"/><path d="M1.5,14 V1.5 H14" fill="none" stroke="#fff" stroke-width="1"/><g fill="none" stroke="#2e2e2e" stroke-linecap="round"><path d="M12.2,4.5 L5.7,10.8" stroke-width="1.35"/><path d="M5.7,10.8 Q4.6,11.8 3.5,10.4" stroke-width="0.95"/><path d="M5.0,6.6 Q5.4,4.6 7.1,5.4" stroke-width="0.95"/><path d="M7.1,5.4 L10.1,10.8" stroke-width="1.25"/><path d="M10.1,10.8 Q10.9,11.8 11.6,10.3" stroke-width="0.95"/></g></svg></div>
<div class="row" style="top:599px"><span class="t" style="left:27.0px;transform:scaleX(1.0115);">VersionMinor</span><span class="t" style="left:193.0px;transform:scaleX(0.9649);">MyFirstPackage</span><span class="t" style="left:291.8px;transform:scaleX(0.9732);">Int32</span><span class="t" style="left:361.0px;transform:scaleX(0.8226);">0</span></div>
</body></html>
